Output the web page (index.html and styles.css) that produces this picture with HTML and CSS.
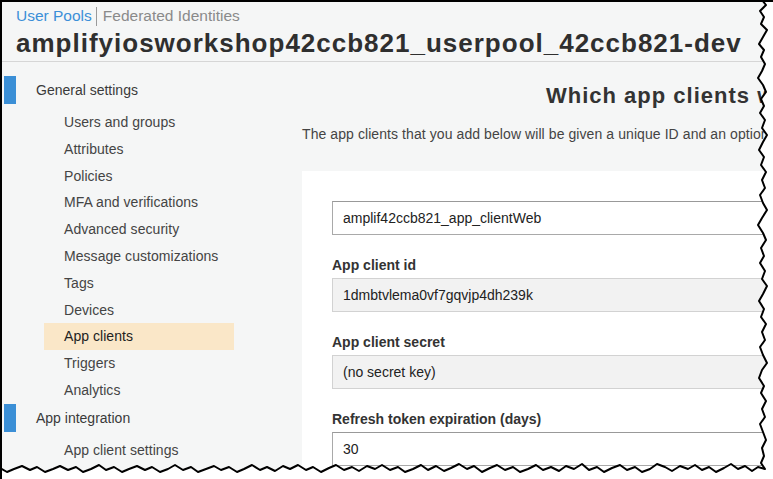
FILE: index.html
```html
<!DOCTYPE html>
<html lang="en">
<head>
<meta charset="utf-8">
<title>User Pools - App clients</title>
<link rel="stylesheet" href="styles.css">
</head>
<body>
<div class="frame">
  <header class="header">
    <div class="crumbs"><span class="crumb-active">User Pools</span><span class="crumb-sep"></span><span class="crumb">Federated Identities</span></div>
    <h1 class="title">amplifyiosworkshop42ccb821_userpool_42ccb821-dev</h1>
  </header>
  <div class="layout">
    <nav class="sidebar">
      <div class="group-head"><span class="group-mark"></span>General settings</div>
      <ul class="nav-list">
        <li class="nav-item">Users and groups</li>
        <li class="nav-item">Attributes</li>
        <li class="nav-item">Policies</li>
        <li class="nav-item">MFA and verifications</li>
        <li class="nav-item">Advanced security</li>
        <li class="nav-item">Message customizations</li>
        <li class="nav-item">Tags</li>
        <li class="nav-item">Devices</li>
        <li class="nav-item nav-item-active">App clients</li>
        <li class="nav-item">Triggers</li>
        <li class="nav-item">Analytics</li>
      </ul>
      <div class="group-head"><span class="group-mark"></span>App integration</div>
      <ul class="nav-list">
        <li class="nav-item">App client settings</li>
        <li class="nav-item">Domain name</li>
      </ul>
    </nav>
    <main class="main">
      <h2 class="heading">Which app clients will have access to this user pool?</h2>
      <p class="intro">The app clients that you add below will be given a unique ID and an optional secret key to access this user pool.</p>
      <section class="card">
        <div class="field field-first">
          <div class="input">amplif42ccb821_app_clientWeb</div>
        </div>
        <div class="field">
          <div class="label">App client id</div>
          <div class="input input-readonly">1dmbtvlema0vf7gqvjp4dh239k</div>
        </div>
        <div class="field">
          <div class="label">App client secret</div>
          <div class="input input-readonly">(no secret key)</div>
        </div>
        <div class="field">
          <div class="label">Refresh token expiration (days)</div>
          <div class="input">30</div>
        </div>
      </section>
    </main>
  </div>
  <svg class="tear" width="773" height="479" viewBox="0 0 773 479" aria-hidden="true">
    <path class="tear-fill" d="M773 0 L762 0 L766 5 L760 11 L764 17 L761 24 L767 30 L763 37 L759 44 L764 50 L761 57 L765 64 L762 71 L758 78 L763 85 L766 92 L761 99 L764 106 L760 113 L765 120 L762 128 L767 135 L763 142 L759 150 L764 157 L761 165 L766 172 L762 180 L765 188 L760 195 L763 203 L767 210 L762 218 L758 225 L763 233 L766 240 L761 248 L764 256 L760 263 L765 271 L762 279 L767 286 L763 294 L759 301 L764 309 L761 317 L766 324 L762 332 L765 340 L760 347 L763 355 L767 363 L762 370 L759 378 L764 386 L761 393 L766 401 L762 409 L765 417 L760 424 L763 432 L766 440 L762 448 L764 456 L761 463 L765 469 L758 467 L752 471 L745 466 L738 469 L731 464 L724 468 L716 472 L709 467 L702 470 L695 465 L688 469 L680 466 L672 471 L665 467 L657 464 L650 469 L642 472 L635 467 L627 470 L620 465 L612 468 L604 472 L597 467 L589 470 L582 464 L574 469 L566 466 L559 471 L551 467 L543 470 L536 465 L528 469 L520 472 L513 467 L505 470 L497 465 L490 468 L482 472 L474 466 L467 469 L459 464 L451 468 L444 471 L436 466 L428 470 L421 465 L413 469 L405 472 L398 467 L390 470 L382 465 L375 469 L367 466 L359 471 L352 467 L344 470 L336 465 L329 468 L321 472 L313 467 L306 470 L298 465 L290 469 L283 466 L275 471 L267 467 L260 470 L252 465 L244 469 L237 472 L229 467 L221 470 L214 466 L206 469 L198 472 L191 467 L183 470 L175 465 L168 469 L160 472 L152 467 L145 470 L137 466 L129 469 L122 472 L114 467 L106 470 L99 465 L91 469 L83 472 L76 467 L68 470 L60 466 L53 469 L45 472 L37 467 L30 470 L22 466 L14 469 L7 472 L0 468 L0 479 L773 479 Z"/>
    <polyline class="tear-line" points="762,0 766,5 760,11 764,17 761,24 767,30 763,37 759,44 764,50 761,57 765,64 762,71 758,78 763,85 766,92 761,99 764,106 760,113 765,120 762,128 767,135 763,142 759,150 764,157 761,165 766,172 762,180 765,188 760,195 763,203 767,210 762,218 758,225 763,233 766,240 761,248 764,256 760,263 765,271 762,279 767,286 763,294 759,301 764,309 761,317 766,324 762,332 765,340 760,347 763,355 767,363 762,370 759,378 764,386 761,393 766,401 762,409 765,417 760,424 763,432 766,440 762,448 764,456 761,463 765,469 758,467 752,471 745,466 738,469 731,464 724,468 716,472 709,467 702,470 695,465 688,469 680,466 672,471 665,467 657,464 650,469 642,472 635,467 627,470 620,465 612,468 604,472 597,467 589,470 582,464 574,469 566,466 559,471 551,467 543,470 536,465 528,469 520,472 513,467 505,470 497,465 490,468 482,472 474,466 467,469 459,464 451,468 444,471 436,466 428,470 421,465 413,469 405,472 398,467 390,470 382,465 375,469 367,466 359,471 352,467 344,470 336,465 329,468 321,472 313,467 306,470 298,465 290,469 283,466 275,471 267,467 260,470 252,465 244,469 237,472 229,467 221,470 214,466 206,469 198,472 191,467 183,470 175,465 168,469 160,472 152,467 145,470 137,466 129,469 122,472 114,467 106,470 99,465 91,469 83,472 76,467 68,470 60,466 53,469 45,472 37,467 30,470 22,466 14,469 7,472 0,468"/>
  </svg>
</div>
</body>
</html>
```
FILE: styles.css
```css
* { box-sizing: border-box; }
html, body { margin: 0; padding: 0; background: #ffffff; }
body { overflow: hidden; }

.frame {
  position: relative;
  width: 773px;
  height: 479px;
  overflow: hidden;
  background: #f5f6f6;
  border-top: 2px solid #000;
  border-left: 2px solid #000;
  font-family: "Liberation Sans", Arial, Helvetica, sans-serif;
  color: #444;
}

.header {
  padding: 4px 0 2px 14px;
  border-bottom: 1px solid #d6d6d6;
}
.crumbs {
  display: flex;
  align-items: center;
  height: 20px;
  font-size: 15.5px;
}
.crumb-active { color: #3b8fd8; }
.crumb-sep {
  display: inline-block;
  width: 1px;
  height: 19px;
  background: #9a9a9a;
  margin: 0 6px 0 4px;
}
.crumb { color: #8a8a8a; }
.title {
  margin: 1px 0 0 0;
  font-size: 26px;
  line-height: 32px;
  font-weight: bold;
  color: #2f2f2f;
  letter-spacing: 1px;
  white-space: nowrap;
}

.layout {
  display: grid;
  grid-template-columns: 270px 1fr;
}

.sidebar { font-size: 14px; }
.group-head {
  display: flex;
  align-items: center;
  height: 28px;
  margin-top: 14px;
  padding-left: 2px;
  color: #3a3a3a;
}
.nav-list + .group-head { margin-top: 0; }
.group-mark {
  width: 12px;
  height: 28px;
  background: #3b8fd6;
  margin-right: 20px;
}
.nav-list {
  list-style: none;
  margin: 5px 0 0 0;
  padding: 0;
}
.nav-item {
  height: 26.8px;
  line-height: 26.8px;
  padding-left: 62px;
  color: #444;
  white-space: nowrap;
  letter-spacing: 0.05px;
}
.nav-item-active {
  margin-left: 42px;
  padding-left: 20px;
  width: 190px;
  background: #fae7c8;
  color: #222;
}

.main {
  padding-left: 30px;
  white-space: nowrap;
}
.heading {
  margin: 20px 0 0 244px;
  font-size: 22px;
  line-height: 28px;
  font-weight: bold;
  color: #333;
  letter-spacing: 1px;
}
.intro {
  margin: 14px 0 0 0;
  font-size: 14px;
  line-height: 20px;
  color: #444;
  letter-spacing: 0.08px;
}
.card {
  margin-top: 27px;
  width: 700px;
  height: 400px;
  background: #ffffff;
  padding: 30px 0 0 30px;
}
.field { margin-top: 20px; }
.field-first { margin-top: 0; }
.label {
  font-size: 14px;
  line-height: 20px;
  font-weight: bold;
  color: #333;
  margin-bottom: 3px;
}
.input {
  width: 600px;
  height: 34px;
  line-height: 32px;
  border: 1px solid #a9a9a9;
  border-top-color: #999;
  background: #ffffff;
  padding-left: 10px;
  font-size: 14px;
  color: #222;
}
.input-readonly {
  background: #f2f2f2;
  border-color: #d2d2d2;
}

.tear {
  position: absolute;
  left: -2px;
  top: -2px;
}
.tear-fill { fill: #ffffff; }
.tear-line {
  fill: none;
  stroke: #000;
  stroke-width: 2;
  stroke-linejoin: round;
}
```
